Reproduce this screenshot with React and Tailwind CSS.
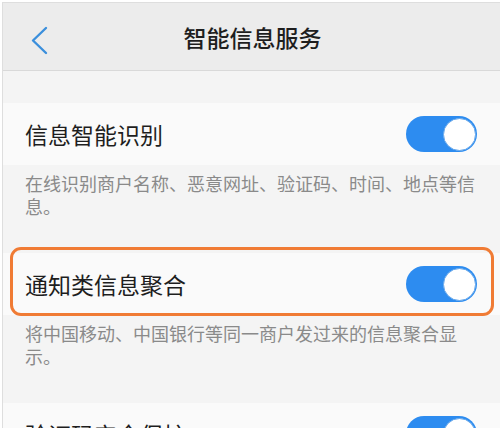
import React from "react";

const font = { fontFamily: '"Noto Sans CJK SC", "Noto Sans", sans-serif' };

function Toggle() {
  return (
    <div className="relative w-[71px] h-[36px] rounded-full bg-[#2d8cf0] shrink-0">
      <div className="absolute right-[1.5px] top-[1.5px] w-[33px] h-[33px] rounded-full bg-white border border-[#6aa9ea]" />
    </div>
  );
}

function Row({ label, highlight }) {
  return (
    <div className="relative h-[62px] bg-[#fafafa] flex items-center justify-between pl-[22px] pr-[23px]">
      <span className="text-[23px] leading-none text-[#1e1e1e]">{label}</span>
      <Toggle />
      {highlight && (
        <div className="absolute left-[7px] right-[6px] top-[-6px] bottom-[-1px] border-[3px] border-[#f07b34] rounded-[11px]" />
      )}
    </div>
  );
}

function Desc({ children }) {
  return (
    <div className="pl-[22px] pr-[20px] pt-[7px] pb-[35px] text-[18px] leading-[23px] text-[#8a8a8a]">
      {children}
    </div>
  );
}

export default function App() {
  return (
    <div className="w-[500px] h-[428px] overflow-hidden bg-white" style={font}>
      <div className="ml-[2px] mt-[2px] h-[426px] border-l border-t border-[#dedede] bg-[#f4f4f4]">
        <div className="relative h-[68px] bg-[#ececec] border-b border-[#d9d9d9] flex items-center justify-center">
          <svg
            className="absolute left-[26px] top-[23px]"
            width="22"
            height="30"
            viewBox="0 0 22 30"
            fill="none"
          >
            <polyline
              points="17,2 4,14.5 17,27"
              stroke="#3b8fdc"
              strokeWidth="2.4"
              strokeLinecap="round"
              strokeLinejoin="round"
            />
          </svg>
          <span className="text-[23px] leading-none font-medium text-[#1e1e1e] ml-[2px] mt-[2px]">
            智能信息服务
          </span>
        </div>
        <div className="h-[32px]" />
        <Row label="信息智能识别" />
        <Desc>在线识别商户名称、恶意网址、验证码、时间、地点等信息。</Desc>
        <Row label="通知类信息聚合" highlight />
        <Desc>将中国移动、中国银行等同一商户发过来的信息聚合显示。</Desc>
        <Row label="验证码安全保护" />
      </div>
    </div>
  );
}
